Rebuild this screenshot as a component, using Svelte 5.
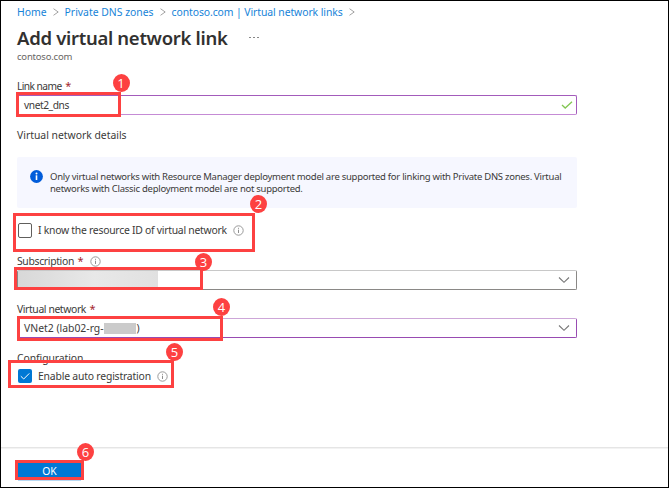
<script>
  const callouts = [
    { n: 1, x: 16, y: 92, w: 105, h: 25, cx: 121, cy: 83 },
    { n: 2, x: 13, y: 213, w: 242, h: 39, cx: 258.5, cy: 203.5 },
    { n: 3, x: 14, y: 267, w: 189, h: 23, cx: 203.5, cy: 261.5 },
    { n: 4, x: 17, y: 316, w: 206, h: 25, cx: 221.5, cy: 306.5 },
    { n: 5, x: 8, y: 360, w: 166, h: 28, cx: 174.5, cy: 351.5 },
    { n: 6, x: 15, y: 460, w: 69, h: 20, cx: 85.5, cy: 451.5 },
  ];
</script>

{#snippet sep()}
  <svg class="sep" width="6" height="8" viewBox="0 0 6 8"><path d="M.5 .7 5.2 4 .5 7.3" fill="none" stroke="#a3a3a3" /></svg>
{/snippet}
{#snippet hint()}
  <svg class="hint" width="11" height="11" viewBox="0 0 11 11"><circle cx="5.5" cy="5.5" r="4.7" fill="none" stroke="#8e8e8e" stroke-width=".9" /><path d="M5.5 4.7V8M5.5 2.8V3.8" stroke="#8e8e8e" /></svg>
{/snippet}
{#snippet chevron()}
  <svg class="end" width="12" height="8" viewBox="0 0 12 8"><path d="M1 1.5 6 6.3 11 1.5" fill="none" stroke="#777" stroke-width="1.1" /></svg>
{/snippet}

<div class="page">
  <nav class="crumbs">
    <span class="c1">Home</span>{@render sep()}<span class="c2">Private DNS zones</span>{@render sep()}<span class="c3">contoso.com | Virtual network links</span>{@render sep()}
  </nav>
  <header><h1>Add virtual network link</h1><span class="dots"><i></i><i></i><i></i></span></header>
  <div class="sub">contoso.com</div>

  <div class="label first"><span class="l1">Link name</span> <b>*</b></div>
  <div class="field valid">
    <span class="v1">vnet2_dns</span>
    <svg class="end check" width="12" height="8" viewBox="0 0 12 8"><path d="M1 4 4.2 7 11 .8" fill="none" stroke="#83c653" stroke-width="1.3" /></svg>
  </div>

  <div class="section"><span class="s1">Virtual network details</span></div>
  <div class="info">
    <svg width="13" height="13" viewBox="0 0 13 13"><circle cx="6.5" cy="6.5" r="6.4" fill="#015cda" /><circle cx="6.5" cy="3.5" r="1" fill="#fff" /><path d="M6.5 5.3V10" stroke="#fff" stroke-width="1.6" /></svg>
    <p>Only virtual networks with Resource Manager deployment model are supported for linking with Private DNS zones. Virtual<br />networks with Classic deployment model are not supported.</p>
  </div>
  <div class="option"><span class="box"></span><span class="o1">I know the resource ID of virtual network</span>{@render hint()}</div>

  <div class="label sublabel"><span class="l2">Subscription</span> <b>*</b>{@render hint()}</div>
  <div class="field plain"><span class="mask"></span>{@render chevron()}</div>
  <div class="label"><span class="l3">Virtual network</span> <b>*</b></div>
  <div class="field changed"><span class="v2">VNet2 (lab02-rg-</span><span class="redact"></span><span>)</span>{@render chevron()}</div>

  <div class="section conf"><span class="s2">Configuration</span></div>
  <div class="option auto">
    <span class="box on"><svg width="14" height="14" viewBox="0 0 14 14"><path d="M2.8 7.2 5.7 10 11.3 4.4" fill="none" stroke="#fff" stroke-width="1" /></svg></span><span class="o2">Enable auto registration</span>{@render hint()}
  </div>
  <footer><button>OK</button></footer>

  {#each callouts as c}
    <div class="frame" style="left:{c.x}px;top:{c.y}px;width:{c.w}px;height:{c.h}px"></div>
    <div class="badge" style="left:{c.cx - 8.5}px;top:{c.cy - 9}px">{c.n}</div>
  {/each}
</div>

<style>
  .page { position: relative; box-sizing: border-box; width: 669px; height: 488px; border: 1px solid #000; background: #fff; display: flex; flex-direction: column; font: 10.4px/16px "Noto Sans", "Open Sans", sans-serif; color: #3b3a39; white-space: nowrap; overflow: hidden; }
  .page > * { flex-shrink: 0; }
  .crumbs { height: 22px; padding-left: 16px; display: flex; align-items: center; color: #1683d8; }
  .c3 { letter-spacing: -.08px; }
  .sep { margin: 0 5.5px 0 6.5px; }
  header { height: 28px; padding-left: 16px; display: flex; align-items: center; }
  h1 { margin: 0; padding-top: 2px; width: 211px; font-size: 18.5px; line-height: 26px; font-weight: 600; color: #323130; letter-spacing: -.3px; }
  .dots { display: flex; gap: 2px; margin-left: 21px; }
  .dots i { width: 2px; height: 1px; background: #888; }
  .sub { height: 13px; line-height: 12px; padding-left: 16px; font-size: 9.5px; letter-spacing: -.2px; color: #686664; }
  .label { height: 16px; line-height: 14px; padding-bottom: 2px; box-sizing: border-box; margin: 12px 0 0 16px; display: flex; align-items: center; }
  .label b { color: #a4262c; font-weight: 400; font-size: 11px; margin-left: 3.5px; }
  .label .hint { margin-left: 6px; }
  .first { height: 15px; margin-top: 16px; padding-bottom: 3px; }
  .sublabel { margin-top: 16px; }
  .l1, .v1 { font-size: 10.2px; letter-spacing: -.42px; }
  .l1 { letter-spacing: -.55px; }
  .l2 { letter-spacing: -.33px; }
  .l3 { letter-spacing: -.4px; }
  .s1 { letter-spacing: -.01px; }
  .s2 { letter-spacing: -.08px; }
  .o1 { letter-spacing: -.26px; }
  .o2 { letter-spacing: -.19px; }
  .field { box-sizing: border-box; width: 560px; height: 20px; margin-left: 16px; border: 1px solid #8a8886; border-radius: 2px; padding: 0 6px; display: flex; align-items: center; }
  .valid { border-color: #a35bbb; border-bottom-color: #c58bd5; }
  .changed { border-color: #984bb2; border-top-color: #cda6d8; }
  .plain { padding-left: 0; border-top-color: #c8c8c8; }
  .end { margin-left: auto; }
  .check { margin-right: -3px; }
  .mask { width: 140px; height: 18px; background: linear-gradient(90deg, #d8d8d8, #e8e8e8 55%, #e1e1e1); }
  .redact { width: 32px; height: 11px; margin-right: 1px; background: #cbcbcb; }
  .section { height: 16px; margin: 12px 0 0 16px; }
  .info { box-sizing: border-box; width: 560px; height: 51px; margin: 14px 0 0 16px; padding: 13px 0 0 13px; background: #f6f7ff; border-radius: 2px; display: flex; align-items: flex-start; }
  .info svg { flex: none; }
  .info p { margin: 1px 0 0 7px; font-size: 9.5px; line-height: 12px; letter-spacing: -.27px; }
  .option { height: 16px; margin: 14px 0 0 17px; display: flex; align-items: center; }
  .option .hint { margin-left: 6px; }
  .auto { margin-top: 2px; }
  .box { box-sizing: border-box; width: 14px; height: 15px; border: 1px solid #605e5c; border-radius: 2px; margin-right: 6px; }
  .on { border: 0; height: 14px; background: #0078d4; }
  .box svg { display: block; }
  footer { box-sizing: border-box; height: 40px; margin-top: auto; border-top: 1px solid #e5e5e5; box-shadow: inset 0 1px #f3f3f3; padding: 15px 0 0 17px; }
  button { display: block; width: 63px; height: 18px; border: 0; border-bottom: 2px solid #b7d8f2; background: #0078d4; color: #fff; font: 10.4px/14px "Noto Sans", sans-serif; padding: 0; }
  .frame { position: absolute; box-sizing: border-box; border: 3px solid #fd4141; margin: -1px 0 0 -1px; }
  .badge { position: absolute; width: 17px; height: 18px; margin: -1px 0 0 -1px; border-radius: 50%; background: #fd4141; color: #fff; font: 13px/18px "Open Sans", sans-serif; text-align: center; }
</style>
